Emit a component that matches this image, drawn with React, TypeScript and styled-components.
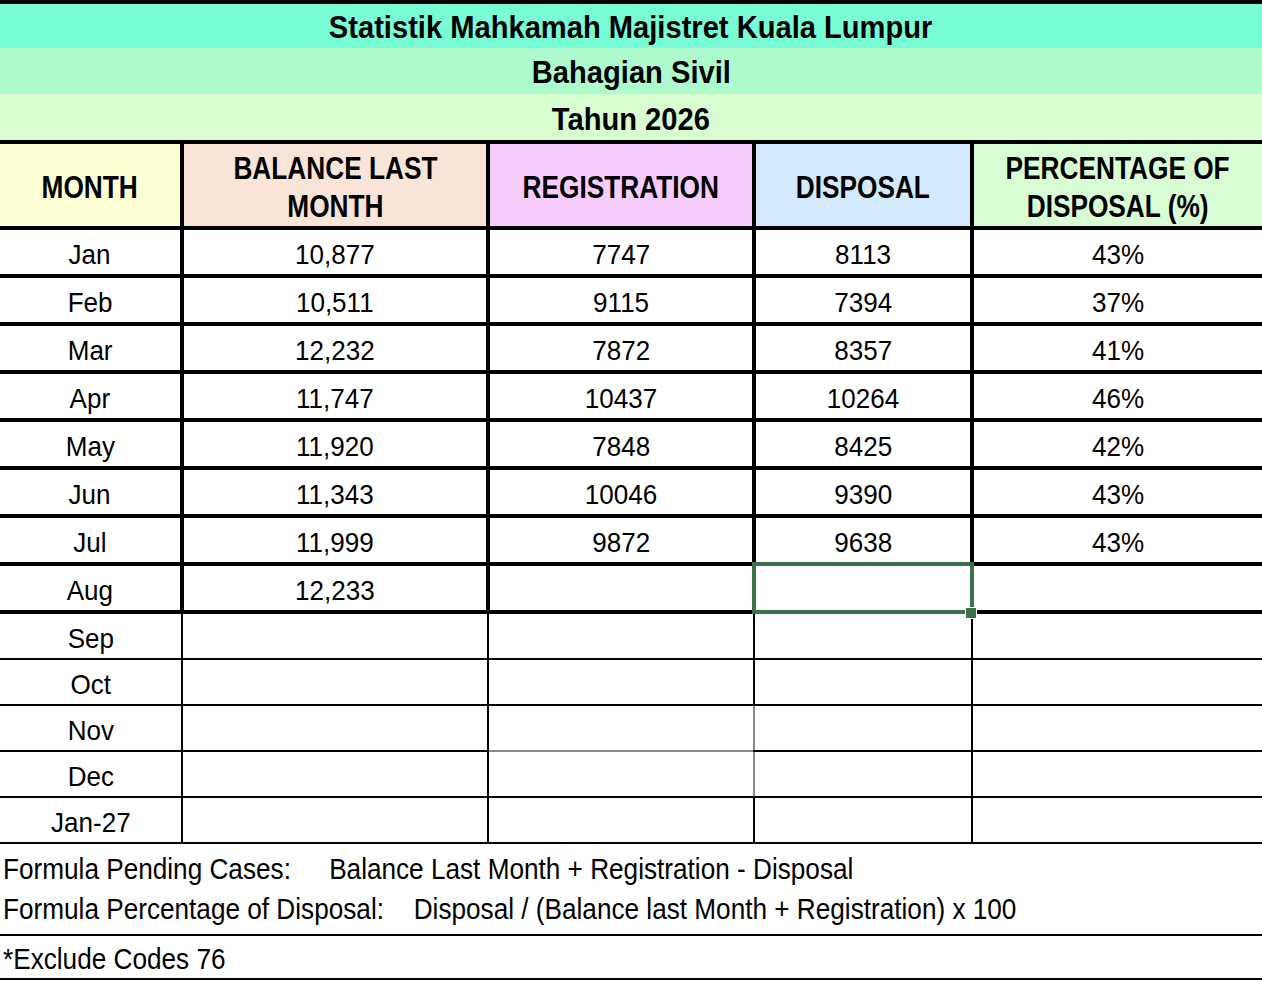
import React from "react";
import styled, { createGlobalStyle } from "styled-components";

const GlobalStyle = createGlobalStyle`
  html, body { margin: 0; padding: 0; background: #fff; }
  body {
    font-family: "Liberation Sans Narrow", "Arial Narrow", "Liberation Sans", Arial, sans-serif;
    color: #000;
  }
`;

const Sheet = styled.div`
  width: 1262px;
  height: 982px;
  box-sizing: border-box;
  border-top: 4px solid #000;
  display: flex;
  flex-direction: column;
  overflow: hidden;
`;

/* Narrow (Arial Narrow-like) rendering of Liberation Sans */
const Squeeze = styled.span<{ $x: number; $origin?: string }>`
  display: inline-block;
  white-space: nowrap;
  transform: scaleX(${(p) => p.$x});
  transform-origin: ${(p) => p.$origin || "center"};
`;

const TitleRow = styled.div<{ $bg: string; $h: number; $rule?: boolean }>`
  height: ${(p) => p.$h}px;
  flex: none;
  box-sizing: content-box;
  background: ${(p) => p.$bg};
  border-bottom: ${(p) => (p.$rule ? "4px solid #000" : "none")};
  display: flex;
  align-items: center;
  justify-content: center;
  font-weight: bold;
  font-size: 32px;
  padding-top: 0;
  & > span {
    position: relative;
    top: ${(p) => (p.$rule ? 2 : 1)}px;
  }
`;

const Row = styled.div<{ $thick?: boolean }>`
  flex: none;
  display: grid;
  grid-template-columns: ${(p) =>
    p.$thick ? "180px 302px 262px 214px 288px" : "181px 304px 264px 216px 289px"};
  column-gap: ${(p) => (p.$thick ? 4 : 2)}px;
  padding-bottom: ${(p) => (p.$thick ? 4 : 2)}px;
  background: #000;
`;

const HeadCell = styled.div<{ $bg: string }>`
  height: 82px;
  background: ${(p) => p.$bg};
  display: flex;
  align-items: center;
  justify-content: center;
  text-align: center;
  font-weight: bold;
  font-size: 32px;
  line-height: 38px;
  padding-top: 3px;
  box-sizing: border-box;
`;

const Cell = styled.div<{ $greyLeft?: boolean; $greyTop?: boolean }>`
  position: relative;
  height: 44px;
  background: #fff;
  display: flex;
  align-items: center;
  justify-content: center;
  font-size: 28px;
  padding-top: 6px;
  box-sizing: border-box;
  box-shadow: ${(p) =>
    [p.$greyLeft ? "-2px 0 0 0 #8a8a8a" : "", p.$greyTop ? "0 -2px 0 0 #8a8a8a" : ""]
      .filter(Boolean)
      .join(", ") || "none"};
`;

const Selection = styled.div`
  position: absolute;
  top: -4px;
  left: -4px;
  right: -4px;
  bottom: -4px;
  border: 4px solid #3d7249;
  z-index: 2;
  pointer-events: none;
`;

const Handle = styled.div`
  position: absolute;
  right: -7px;
  bottom: -9px;
  width: 10px;
  height: 10px;
  background: #3d7249;
  border: 1px solid #fff;
  z-index: 3;
`;

const Notes = styled.div`
  flex: none;
  height: 92px;
  box-sizing: border-box;
  border-bottom: 2px solid #000;
  display: flex;
  flex-direction: column;
  justify-content: center;
  gap: 2px;
  padding: 0 0 0 3px;
  font-size: 30px;
`;

const NoteLine = styled.div`
  line-height: 38px;
`;

const NoteLabel = styled.span<{ $w: number }>`
  display: inline-block;
  width: ${(p) => p.$w}px;
`;

const Footnote = styled.div`
  flex: none;
  height: 44px;
  border-bottom: 2px solid #000;
  display: flex;
  align-items: center;
  padding-left: 3px;
  padding-top: 4px;
  box-sizing: border-box;
  font-size: 30px;
`;

type DataRow = [string, string, string, string, string];

const rows: DataRow[] = [
  ["Jan", "10,877", "7747", "8113", "43%"],
  ["Feb", "10,511", "9115", "7394", "37%"],
  ["Mar", "12,232", "7872", "8357", "41%"],
  ["Apr", "11,747", "10437", "10264", "46%"],
  ["May", "11,920", "7848", "8425", "42%"],
  ["Jun", "11,343", "10046", "9390", "43%"],
  ["Jul", "11,999", "9872", "9638", "43%"],
  ["Aug", "12,233", "", "", ""],
];

const emptyMonths = ["Sep", "Oct", "Nov", "Dec", "Jan-27"];

const T = ({ children }: { children: React.ReactNode }) => <Squeeze $x={0.91}>{children}</Squeeze>;
const H = ({ children }: { children: React.ReactNode }) => <Squeeze $x={0.82}>{children}</Squeeze>;
const D = ({ children }: { children: React.ReactNode }) => <Squeeze $x={0.93}>{children}</Squeeze>;

export default function App() {
  return (
    <>
      <GlobalStyle />
      <Sheet>
        <TitleRow $bg="#78fcd5" $h={44}>
          <T>Statistik Mahkamah Majistret Kuala Lumpur</T>
        </TitleRow>
        <TitleRow $bg="#adfbcc" $h={46}>
          <T>Bahagian Sivil</T>
        </TitleRow>
        <TitleRow $bg="#d8fdd0" $h={46} $rule>
          <T>Tahun 2026</T>
        </TitleRow>
        <Row $thick>
          <HeadCell $bg="#ffffd6"><H>MONTH</H></HeadCell>
          <HeadCell $bg="#f8e5d8"><H>BALANCE LAST<br />MONTH</H></HeadCell>
          <HeadCell $bg="#f5ccfa"><H>REGISTRATION</H></HeadCell>
          <HeadCell $bg="#d4eafc"><H>DISPOSAL</H></HeadCell>
          <HeadCell $bg="#d8fcd3"><H>PERCENTAGE OF<br />DISPOSAL (%)</H></HeadCell>
        </Row>
        {rows.map((r) => (
          <Row $thick key={r[0]}>
            <Cell><D>{r[0]}</D></Cell>
            <Cell><D>{r[1]}</D></Cell>
            <Cell><D>{r[2]}</D></Cell>
            <Cell>
              <D>{r[3]}</D>
              {r[0] === "Aug" && (
                <>
                  <Selection />
                  <Handle />
                </>
              )}
            </Cell>
            <Cell><D>{r[4]}</D></Cell>
          </Row>
        ))}
        {emptyMonths.map((m) => (
          <Row key={m}>
            <Cell><D>{m}</D></Cell>
            <Cell />
            <Cell $greyTop={m === "Dec"} />
            <Cell $greyLeft={m === "Nov" || m === "Dec"} />
            <Cell />
          </Row>
        ))}
        <Notes>
          <NoteLine>
            <Squeeze $x={0.872} $origin="left">
              <NoteLabel $w={374}>Formula Pending Cases:</NoteLabel>
              Balance Last Month + Registration - Disposal
            </Squeeze>
          </NoteLine>
          <NoteLine>
            <Squeeze $x={0.872} $origin="left">
              <NoteLabel $w={471}>Formula Percentage of Disposal:</NoteLabel>
              Disposal / (Balance last Month + Registration) x 100
            </Squeeze>
          </NoteLine>
        </Notes>
        <Footnote>
          <Squeeze $x={0.872} $origin="left">*Exclude Codes 76</Squeeze>
        </Footnote>
      </Sheet>
    </>
  );
}
